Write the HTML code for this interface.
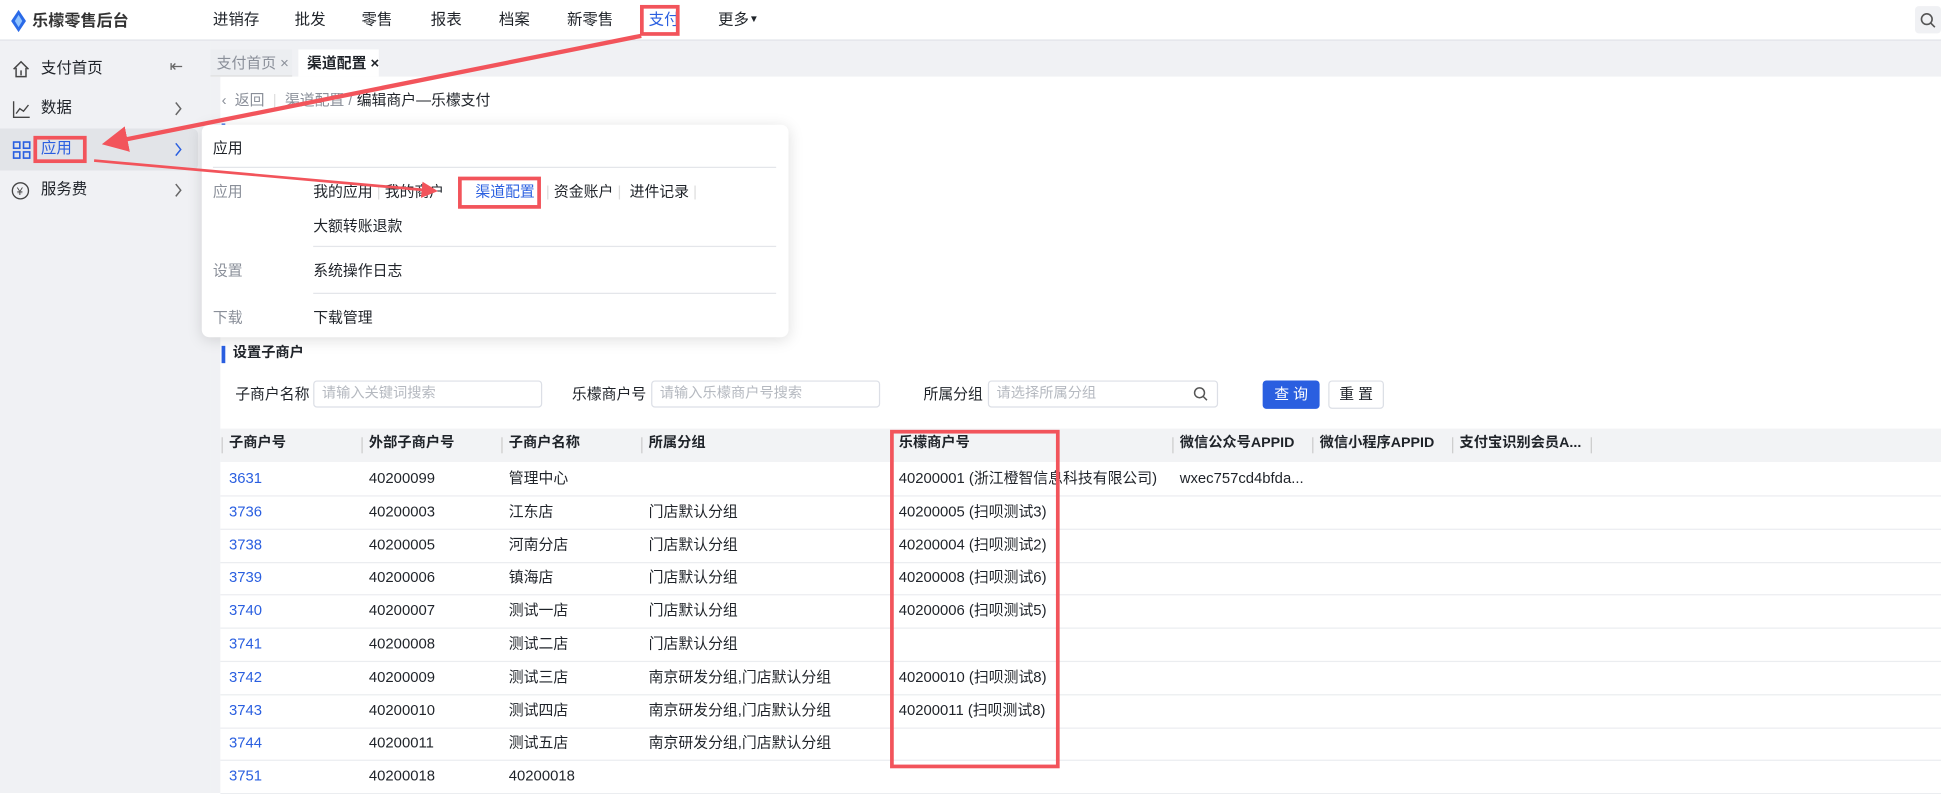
<!DOCTYPE html>
<html><head><meta charset="utf-8"><style>
*{margin:0;padding:0;box-sizing:border-box}
html,body{width:1941px;height:793px;overflow:hidden;background:#fff}
body{font-family:"Liberation Sans","Noto Sans CJK SC",sans-serif;color:#1f2329;font-size:12px}
#w{position:absolute;left:0;top:0;width:1568px;height:642px;transform:scale(1.2379,1.2352);transform-origin:0 0;background:#fff}
.a{position:absolute;white-space:nowrap;line-height:1.2}
.top{left:0;top:0;width:1568px;height:33px;background:#fff;border-bottom:1px solid #dcdfe6}
.side{left:0;top:33px;width:170px;height:609px;background:#f0f1f4}
.tabs{left:170px;top:33px;width:1398px;height:29px;background:#f0f1f4}
.grey{color:#8a8f99}
.red{border:3px solid #f2545b;position:absolute}
.th{background:#f2f3f5}
.blue{color:#2a5fe0}
</style></head><body><div id="w">
<div class="a top"></div>
<svg class="a" style="left:8px;top:8px" width="14" height="18" viewBox="0 0 14 18"><path d="M7 0 L13 9 L7 18 L1 9 Z" fill="#2a6ae8"/><path d="M7 4 L10 9 L7 14 L4 9Z" fill="#8fc3ff"/></svg>
<div class="a" style="left:26px;top:9px;font-size:13px;font-weight:bold;color:#333">乐檬零售后台</div>
<div class="a" style="left:172px;top:9px;font-size:12.5px">进销存</div>
<div class="a" style="left:238px;top:9px;font-size:12.5px">批发</div>
<div class="a" style="left:292px;top:9px;font-size:12.5px">零售</div>
<div class="a" style="left:348px;top:9px;font-size:12.5px">报表</div>
<div class="a" style="left:403px;top:9px;font-size:12.5px">档案</div>
<div class="a" style="left:458px;top:9px;font-size:12.5px">新零售</div>
<div class="a blue" style="left:524px;top:9px;font-size:12.5px">支付</div>
<div class="red" style="left:517px;top:4px;width:32px;height:25px"></div>
<div class="a" style="left:580px;top:9px;font-size:12.5px">更多<span style="font-size:8px;vertical-align:2px">▼</span></div>
<div class="a" style="left:1547px;top:5px;width:21px;height:22px;background:#f0f1f4;border-radius:3px"></div>
<svg class="a" style="left:1551px;top:10px" width="13" height="13"><circle cx="5.5" cy="5.5" r="4.3" fill="none" stroke="#555" stroke-width="1.3"/><path d="M8.8 8.8L12 12" stroke="#555" stroke-width="1.3"/></svg>

<div class="a side"></div>
<div class="a" style="left:0;top:104px;width:160px;height:34px;background:#e2e4e8;border-radius:0 5px 5px 0"></div>
<svg class="a" style="left:9px;top:48px" width="16" height="16"><path d="M2 8 L8 2 L14 8 M4 7 V14 H12 V7 M8 9 V13" fill="none" stroke="#444" stroke-width="1.2"/></svg>
<div class="a" style="left:33px;top:48px;font-size:12.5px">支付首页</div>
<div class="a" style="left:137px;top:46px;font-size:13px;color:#666">⇤</div>
<svg class="a" style="left:10px;top:81px" width="15" height="15"><path d="M1 1V14H14 M3 11 L6 7 L9 9 L13 4" fill="none" stroke="#444" stroke-width="1.1"/></svg>
<div class="a" style="left:33px;top:80px;font-size:12.5px">数据</div>
<svg class="a" style="left:10px;top:114px" width="15" height="15" fill="none" stroke="#2a5fe0" stroke-width="1.3"><rect x="1" y="1" width="5" height="5"/><rect x="9" y="1" width="5" height="5"/><rect x="1" y="9" width="5" height="5"/><rect x="9" y="9" width="5" height="5"/></svg>
<div class="a blue" style="left:33px;top:113px;font-size:12.5px">应用</div>
<div class="red" style="left:27px;top:110px;width:43px;height:22px"></div>
<svg class="a" style="left:9px;top:147px" width="15" height="15"><circle cx="7.5" cy="7.5" r="6.5" fill="none" stroke="#444" stroke-width="1.1"/><text x="4.5" y="11" font-size="9" fill="#444">¥</text></svg>
<div class="a" style="left:33px;top:146px;font-size:12.5px">服务费</div>
<svg class="a" style="left:140px;top:82px" width="8" height="12"><path d="M2 1 L6 6 L2 11" fill="none" stroke="#666" stroke-width="1.2"/></svg>
<svg class="a" style="left:140px;top:115px" width="8" height="12"><path d="M2 1 L6 6 L2 11" fill="none" stroke="#2a5fe0" stroke-width="1.2"/></svg>
<svg class="a" style="left:140px;top:148px" width="8" height="12"><path d="M2 1 L6 6 L2 11" fill="none" stroke="#666" stroke-width="1.2"/></svg>

<div class="a tabs"></div>
<div class="a" style="left:170px;top:40px;width:66px;height:22px;background:#eceef1;border-bottom:1px solid #ddd"></div>
<div class="a grey" style="left:175px;top:44px">支付首页 ×</div>
<div class="a" style="left:241px;top:40px;width:65px;height:22px;background:#fff"></div>
<div class="a" style="left:248px;top:44px;font-weight:bold">渠道配置 ×</div>
<div class="a" style="left:170px;top:62px;width:8px;height:580px;background:#f0f1f4"></div>

<div class="a grey" style="left:179px;top:74px">‹ &nbsp;返回 &nbsp;<span style="color:#ddd">|</span>&nbsp; 渠道配置 / <span style="color:#1f2329">编辑商户—乐檬支付</span></div>
<div class="a" style="left:179px;top:100px;width:3px;height:4px;background:#2a5fe0"></div>

<div class="a" style="left:163px;top:101px;width:474px;height:172px;background:#fff;border-radius:6px;box-shadow:0 2px 12px rgba(0,0,0,.13)"></div>
<div class="a" style="left:172px;top:113px">应用</div>
<div class="a" style="left:172px;top:135px;width:455px;height:1px;background:#e4e6ea"></div>
<div class="a grey" style="left:172px;top:148px">应用</div>
<div class="a" style="left:253px;top:148px">我的应用 <span style="color:#ddd">|</span> 我的商户</div>
<div class="a" style="left:368px;top:144px;width:4px;height:22px;background:#fff"></div>
<div class="a blue" style="left:384px;top:148px">渠道配置</div>
<div class="red" style="left:370px;top:143px;width:67px;height:26px"></div>
<div class="a" style="left:441px;top:148px"><span style="color:#ddd">|</span> 资金账户 <span style="color:#ddd">|</span>&nbsp; 进件记录 <span style="color:#ddd">|</span></div>
<div class="a" style="left:253px;top:176px">大额转账退款</div>
<div class="a" style="left:253px;top:199px;width:374px;height:1px;background:#e4e6ea"></div>
<div class="a grey" style="left:172px;top:212px">设置</div>
<div class="a" style="left:253px;top:212px">系统操作日志</div>
<div class="a" style="left:253px;top:237px;width:374px;height:1px;background:#e4e6ea"></div>
<div class="a grey" style="left:172px;top:250px">下载</div>
<div class="a" style="left:253px;top:250px">下载管理</div>

<div class="a" style="left:179px;top:280px;width:3px;height:14px;background:#2a5fe0"></div>
<div class="a" style="left:188px;top:280px;font-weight:bold;font-size:11.5px">设置子商户</div>
<div class="a" style="left:190px;top:312px">子商户名称</div>
<div class="a" style="left:253px;top:308px;width:185px;height:22px;border:1px solid #dcdfe6;border-radius:3px;color:#b5b9c0;font-size:11.5px;padding:4px 6px">请输入关键词搜索</div>
<div class="a" style="left:462px;top:312px">乐檬商户号</div>
<div class="a" style="left:526px;top:308px;width:185px;height:22px;border:1px solid #dcdfe6;border-radius:3px;color:#b5b9c0;font-size:11.5px;padding:4px 6px">请输入乐檬商户号搜索</div>
<div class="a" style="left:746px;top:312px">所属分组</div>
<div class="a" style="left:798px;top:308px;width:186px;height:22px;border:1px solid #dcdfe6;border-radius:3px;color:#b5b9c0;font-size:11.5px;padding:4px 6px">请选择所属分组</div>
<svg class="a" style="left:964px;top:313px" width="12" height="12"><circle cx="5" cy="5" r="4" fill="none" stroke="#555" stroke-width="1.2"/><path d="M8 8L11 11" stroke="#555" stroke-width="1.2"/></svg>
<div class="a" style="left:1020px;top:308px;width:46px;height:23px;background:#2a5fe0;border-radius:3px;color:#fff;text-align:center;line-height:23px">查 询</div>
<div class="a" style="left:1073px;top:308px;width:45px;height:23px;border:1px solid #dcdfe6;border-radius:3px;text-align:center;line-height:21px">重 置</div>

<div class="a th" style="left:178px;top:347px;width:1390px;height:27px"></div>
<div id="tb"></div>
<div class="red" style="left:719px;top:348px;width:137px;height:274px"></div>

<svg class="a" style="left:0;top:0" width="1568" height="642">
<defs><marker id="m" markerWidth="6" markerHeight="6" refX="2" refY="3" orient="auto"><path d="M0 0 L6 3 L0 6 Z" fill="#f2545b"/></marker></defs>
<line x1="518" y1="29" x2="96" y2="114" stroke="#f2545b" stroke-width="3.5" marker-end="url(#m)"/>
<line x1="76" y1="130" x2="345" y2="154" stroke="#f2545b" stroke-width="2.2" marker-end="url(#m)"/>
</svg>
</div>
<script>
var cols=[185,298,411,524,726,953,1066,1179];
var hd=["子商户号","外部子商户号","子商户名称","所属分组","乐檬商户号","微信公众号APPID","微信小程序APPID","支付宝识别会员A..."];
var rows=[["3631","40200099","管理中心","","40200001 (浙江橙智信息科技有限公司)","wxec757cd4bfda..."],
["3736","40200003","江东店","门店默认分组","40200005 (扫呗测试3)"],
["3738","40200005","河南分店","门店默认分组","40200004 (扫呗测试2)"],
["3739","40200006","镇海店","门店默认分组","40200008 (扫呗测试6)"],
["3740","40200007","测试一店","门店默认分组","40200006 (扫呗测试5)"],
["3741","40200008","测试二店","门店默认分组",""],
["3742","40200009","测试三店","南京研发分组,门店默认分组","40200010 (扫呗测试8)"],
["3743","40200010","测试四店","南京研发分组,门店默认分组","40200011 (扫呗测试8)"],
["3744","40200011","测试五店","南京研发分组,门店默认分组",""],
["3751","40200018","40200018","",""]];
var h="";
hd.forEach(function(t,i){h+='<div class="a" style="left:'+cols[i]+'px;top:353px;font-weight:bold;font-size:11.5px">'+t+'</div>';
h+='<div class="a" style="left:'+(cols[i]-6)+'px;top:354px;width:1px;height:13px;background:#ccc"></div>';});
h+='<div class="a" style="left:1285px;top:354px;width:1px;height:13px;background:#ccc"></div>';
rows.forEach(function(r,j){var y=380+j*26.8;
r.forEach(function(t,i){h+='<div class="a'+(i==0?' blue':'')+'" style="left:'+cols[i]+'px;top:'+y+'px">'+t+'</div>';});
h+='<div class="a" style="left:178px;top:'+(y+21)+'px;width:1390px;height:1px;background:#ebedf0"></div>';});
document.getElementById("tb").outerHTML=h;
</script>
</body></html>
